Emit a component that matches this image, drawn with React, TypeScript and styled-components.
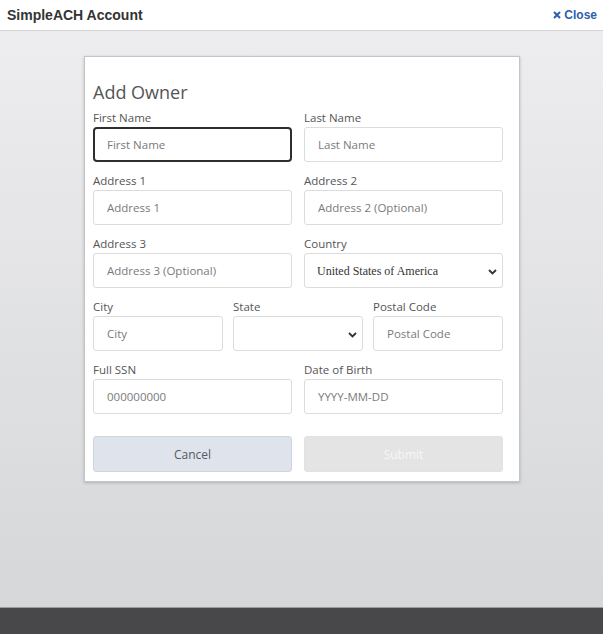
import React from "react";
import styled, { createGlobalStyle } from "styled-components";

const Global = createGlobalStyle`
  html, body { margin: 0; padding: 0; height: 100%; }
  body { font-family: "Open Sans", "Noto Sans", sans-serif; }
  #root { height: 100%; }
`;

const Page = styled.div`
  width: 603px;
  height: 634px;
  display: flex;
  flex-direction: column;
  overflow: hidden;
`;

const Header = styled.header`
  height: 30px;
  flex: none;
  background: #ffffff;
  border-bottom: 1px solid #d4d4d6;
  display: flex;
  align-items: center;
  justify-content: space-between;
  padding: 0 6px 0 7px;
`;

const Title = styled.h1`
  margin: 0;
  font-family: "Liberation Sans", Arial, sans-serif;
  font-size: 14px;
  font-weight: 700;
  color: #333333;
`;

const CloseLink = styled.a`
  font-family: "Liberation Sans", Arial, sans-serif;
  font-size: 12px;
  font-weight: 700;
  color: #2d5fae;
  text-decoration: none;
  display: flex;
  align-items: center;
  gap: 3px;
`;

const Body = styled.main`
  flex: 1;
  background: linear-gradient(#ededef, #d6d7d9);
  display: flex;
  justify-content: flex-start;
  align-items: flex-start;
  padding: 25px 0 0 84px;
`;

const Footer = styled.div`
  height: 26px;
  flex: none;
  background: #48484b;
  border-top: 1px solid #9b9b9d;
`;

const Card = styled.section`
  background: #ffffff;
  border: 1px solid #c4c4c6;
  box-shadow: 0 1px 3px rgba(0, 0, 0, 0.2);
  padding: 24px 8px 10px 8px;
  box-sizing: border-box;
  width: 436px;
  height: 426px;
`;

const CardTitle = styled.h2`
  margin: 0 0 7px;
  font-weight: 400;
  font-size: 18px;
  line-height: 22px;
  color: #555555;
`;

const Row = styled.div<{ $cols: number }>`
  display: grid;
  grid-template-columns: repeat(${(p) => p.$cols}, minmax(0, 1fr));
  column-gap: ${(p) => (p.$cols === 3 ? 10 : 12)}px;
  width: 410px;
  margin-bottom: 11px;
`;

const Field = styled.label`
  display: flex;
  flex-direction: column;
  min-width: 0;
`;

const Label = styled.span`
  font-size: 11.5px;
  line-height: 16px;
  color: #555555;
  margin-bottom: 1px;
`;

const Input = styled.input<{ $focused?: boolean }>`
  width: 100%;
  min-width: 0;
  height: 35px;
  box-sizing: border-box;
  border: ${(p) => (p.$focused ? "2px solid #2e2e2e" : "1px solid #dcdcdc")};
  border-radius: ${(p) => (p.$focused ? "4px" : "3px")};
  padding: 0 ${(p) => (p.$focused ? 12 : 13)}px;
  font-family: "Open Sans", "Noto Sans", sans-serif;
  font-size: 11.5px;
  color: #444;
  background: #fff;
  outline: none;
  &::placeholder { color: #7a7a7a; }
`;

const SelectWrap = styled.div`
  position: relative;
  display: flex;
  min-width: 0;
`;

const Select = styled.select<{ $serif?: boolean }>`
  appearance: none;
  width: 100%;
  min-width: 0;
  height: 35px;
  box-sizing: border-box;
  border: 1px solid #dcdcdc;
  border-radius: 3px;
  padding: 0 12px;
  background: #fff;
  font-family: ${(p) => (p.$serif ? '"Liberation Serif", "Times New Roman", serif' : '"Open Sans", sans-serif')};
  font-size: 12px;
  color: #333;
  outline: none;
`;

const Chevron = styled.svg`
  position: absolute;
  right: 6px;
  top: 50%;
  width: 9px;
  height: 6px;
  margin-top: -2px;
  pointer-events: none;
`;

const Buttons = styled.div`
  display: grid;
  grid-template-columns: 1fr 1fr;
  column-gap: 12px;
  width: 410px;
  margin-top: 22px;
`;

const Button = styled.button<{ $variant: "cancel" | "submit" }>`
  height: 36px;
  border-radius: 3px;
  font-family: "Open Sans", sans-serif;
  font-size: 12px;
  border: 1px solid ${(p) => (p.$variant === "cancel" ? "#cfd4de" : "#e2e2e2")};
  background: ${(p) => (p.$variant === "cancel" ? "#dfe3eb" : "#e4e4e4")};
  color: ${(p) => (p.$variant === "cancel" ? "#555a62" : "#f7f7f7")};
`;

const ChevronIcon = () => (
  <Chevron viewBox="0 0 9 6">
    <path d="M1 1 L4.5 4.5 L8 1" fill="none" stroke="#333" strokeWidth="1.8" />
  </Chevron>
);

export default function App() {
  return (
    <>
      <Global />
      <Page>
        <Header>
          <Title>SimpleACH Account</Title>
          <CloseLink href="#">
            <svg width="8" height="8" viewBox="0 0 8 8">
              <path d="M1 1 L7 7 M7 1 L1 7" stroke="#2d5fae" strokeWidth="2" />
            </svg>
            Close
          </CloseLink>
        </Header>
        <Body>
          <Card>
            <CardTitle>Add Owner</CardTitle>
            <Row $cols={2}>
              <Field>
                <Label>First Name</Label>
                <Input $focused placeholder="First Name" />
              </Field>
              <Field>
                <Label>Last Name</Label>
                <Input placeholder="Last Name" />
              </Field>
            </Row>
            <Row $cols={2}>
              <Field>
                <Label>Address 1</Label>
                <Input placeholder="Address 1" />
              </Field>
              <Field>
                <Label>Address 2</Label>
                <Input placeholder="Address 2 (Optional)" />
              </Field>
            </Row>
            <Row $cols={2}>
              <Field>
                <Label>Address 3</Label>
                <Input placeholder="Address 3 (Optional)" />
              </Field>
              <Field>
                <Label>Country</Label>
                <SelectWrap>
                  <Select $serif defaultValue="US">
                    <option value="US">United States of America</option>
                  </Select>
                  <ChevronIcon />
                </SelectWrap>
              </Field>
            </Row>
            <Row $cols={3}>
              <Field>
                <Label>City</Label>
                <Input placeholder="City" />
              </Field>
              <Field>
                <Label>State</Label>
                <SelectWrap>
                  <Select defaultValue="">
                    <option value=""></option>
                  </Select>
                  <ChevronIcon />
                </SelectWrap>
              </Field>
              <Field>
                <Label>Postal Code</Label>
                <Input placeholder="Postal Code" />
              </Field>
            </Row>
            <Row $cols={2}>
              <Field>
                <Label>Full SSN</Label>
                <Input placeholder="000000000" />
              </Field>
              <Field>
                <Label>Date of Birth</Label>
                <Input placeholder="YYYY-MM-DD" />
              </Field>
            </Row>
            <Buttons>
              <Button $variant="cancel">Cancel</Button>
              <Button $variant="submit">Submit</Button>
            </Buttons>
          </Card>
        </Body>
        <Footer />
      </Page>
    </>
  );
}
